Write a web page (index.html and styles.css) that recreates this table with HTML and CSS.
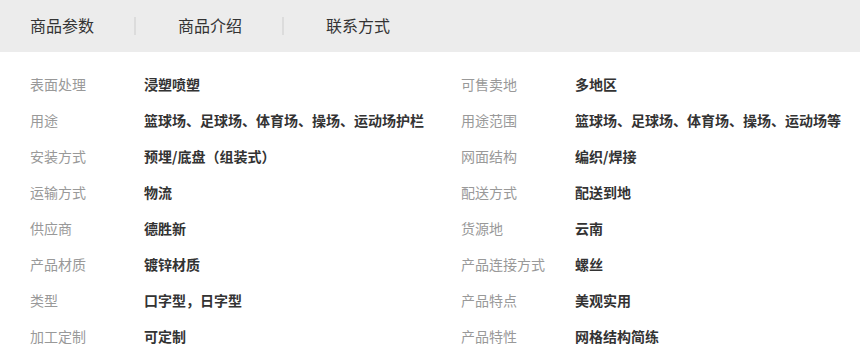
FILE: index.html
```html
<!DOCTYPE html>
<html lang="zh-CN">
<head>
<meta charset="utf-8">
<link rel="stylesheet" href="styles.css">
</head>
<body>
<div class="tabs">
  <span class="tab">商品参数</span><span class="sep"></span>
  <span class="tab">商品介绍</span><span class="sep"></span>
  <span class="tab">联系方式</span>
</div>
<div class="params">
  <div class="item"><span class="k">表面处理</span><span class="v">浸塑喷塑</span></div>
  <div class="item"><span class="k">可售卖地</span><span class="v">多地区</span></div>
  <div class="item"><span class="k">用途</span><span class="v">篮球场、足球场、体育场、操场、运动场护栏</span></div>
  <div class="item"><span class="k">用途范围</span><span class="v">篮球场、足球场、体育场、操场、运动场等</span></div>
  <div class="item"><span class="k">安装方式</span><span class="v">预埋/底盘（组装式）</span></div>
  <div class="item"><span class="k">网面结构</span><span class="v">编织/焊接</span></div>
  <div class="item"><span class="k">运输方式</span><span class="v">物流</span></div>
  <div class="item"><span class="k">配送方式</span><span class="v">配送到地</span></div>
  <div class="item"><span class="k">供应商</span><span class="v">德胜新</span></div>
  <div class="item"><span class="k">货源地</span><span class="v">云南</span></div>
  <div class="item"><span class="k">产品材质</span><span class="v">镀锌材质</span></div>
  <div class="item"><span class="k">产品连接方式</span><span class="v">螺丝</span></div>
  <div class="item"><span class="k">类型</span><span class="v">口字型，日字型</span></div>
  <div class="item"><span class="k">产品特点</span><span class="v">美观实用</span></div>
  <div class="item"><span class="k">加工定制</span><span class="v">可定制</span></div>
  <div class="item"><span class="k">产品特性</span><span class="v">网格结构简练</span></div>
</div>
</body>
</html>
```
FILE: styles.css
```css
html, body {
  margin: 0;
  padding: 0;
  background: #fff;
  font-family: "Noto Sans CJK SC", "Microsoft YaHei", sans-serif;
  overflow: hidden;
}
.tabs {
  height: 52px;
  background: #ececec;
  display: flex;
  align-items: center;
  padding-left: 30px;
  box-sizing: border-box;
}
.tab {
  font-size: 16px;
  color: #333;
  margin-right: 40px;
  line-height: 52px;
  margin-top: -2px;
}
.sep {
  width: 2px;
  height: 18px;
  background: #dcdcdc;
  margin-right: 42px;
}
.params {
  display: grid;
  grid-template-columns: 431px 1fr;
  padding: 14px 0 0 30px;
}
.item {
  display: flex;
  align-items: center;
  height: 36px;
  font-size: 14px;
  white-space: nowrap;
}
.k {
  width: 114px;
  color: #999;
  flex: none;
}
.v {
  color: #333;
  font-weight: 700;
}
```
